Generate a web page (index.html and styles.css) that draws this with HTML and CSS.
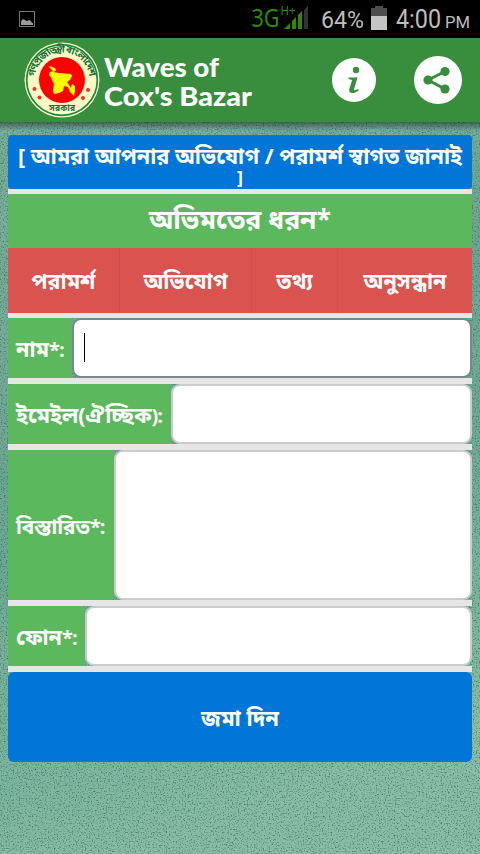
FILE: index.html
```html
<!DOCTYPE html>
<html lang="bn">
<head>
<meta charset="utf-8">
<title>Waves of Cox's Bazar</title>
<link rel="stylesheet" href="styles.css">
</head>
<body>
<div class="screen">
  <svg class="backdrop" width="480" height="732" viewBox="0 0 480 732" aria-hidden="true">
    <defs>
      <linearGradient id="sea" x1="0" y1="0" x2="0.25" y2="1">
        <stop offset="0" stop-color="#76ab97"/>
        <stop offset="0.5" stop-color="#69a390"/>
        <stop offset="0.86" stop-color="#7ab49d"/>
        <stop offset="1" stop-color="#88bca4"/>
      </linearGradient>
      <linearGradient id="shade" x1="0" y1="0" x2="0" y2="1">
        <stop offset="0" stop-color="#000" stop-opacity=".42"/>
        <stop offset="1" stop-color="#000" stop-opacity="0"/>
      </linearGradient>
      <filter id="grain" x="0" y="0" width="100%" height="100%" color-interpolation-filters="sRGB">
        <feTurbulence type="fractalNoise" baseFrequency="0.68" numOctaves="2" seed="8"/>
        <feColorMatrix values="0 0 0 0 0.2  0 0 0 0 0.42  0 0 0 0 0.37  2.4 0 0 0 -1.2"/>
      </filter>
      <filter id="cloud" x="0" y="0" width="100%" height="100%" color-interpolation-filters="sRGB">
        <feTurbulence type="fractalNoise" baseFrequency="0.012" numOctaves="2" seed="3"/>
        <feColorMatrix values="0 0 0 0 0.56  0 0 0 0 0.76  0 0 0 0 0.68  0.6 0 0 0 -0.16"/>
      </filter>
    </defs>
    <rect width="480" height="732" fill="url(#sea)"/>
    <rect width="480" height="732" filter="url(#cloud)"/>
    <rect width="480" height="732" filter="url(#grain)"/>
    <rect width="480" height="9" fill="url(#shade)"/>
  </svg>

  <div class="status">
    <svg width="480" height="38" viewBox="0 0 480 38">
      <rect x="19.5" y="11.5" width="15" height="15" fill="none" stroke="#777"/>
      <path d="M21 25v-4l2-2 2 1 2 1 2-1 2 1 1 2h1v2z" fill="#999"/>
      <text class="net" x="251.5" y="27" font-size="26" textLength="28" lengthAdjust="spacingAndGlyphs">3G</text>
      <text class="net" x="280.5" y="15" font-size="13" textLength="15" lengthAdjust="spacingAndGlyphs">H+</text>
      <path d="M284 29l6-6v6zM292 21l4-4v12h-4zM298 15l4-4v18h-4z" fill="#2a8b00"/>
      <path d="M304 10l4-4v23h-4z" fill="#333"/>
      <text class="stat" x="321" y="28" font-size="24" textLength="43" lengthAdjust="spacingAndGlyphs">64%</text>
      <path d="M375 6h8v2h4v8h-16V8h4z" fill="#4d4d4d"/>
      <rect x="371" y="16" width="16" height="14" fill="#c4c4c4"/>
      <text class="stat" x="396" y="28" font-size="25" textLength="45" lengthAdjust="spacingAndGlyphs">4:00</text>
      <text class="stat" x="445" y="28" font-size="17" textLength="25" lengthAdjust="spacingAndGlyphs">PM</text>
    </svg>
  </div>

  <header class="bar">
    <svg class="seal" width="76" height="76" viewBox="0 0 76 76">
      <defs>
        <path id="arcTop" d="M10.5 38a27.5 27.5 0 0 1 55 0"/>
      </defs>
      <circle cx="38" cy="38" r="37.5" fill="#fffbc6"/>
      <circle cx="38" cy="38" r="35.3" fill="none" stroke="#168a42" stroke-width="1.7"/>
      <circle cx="38" cy="38" r="23" fill="red"/>
      <text class="ring"><textPath href="#arcTop" startOffset="3" textLength="80">গণপ্রজাতন্ত্রী বাংলাদেশ</textPath></text>
      <text class="ring" x="25" y="69" textLength="26" lengthAdjust="spacingAndGlyphs">সরকার</text>
      <path d="M26 24l2 1 3 1 1 2-2 2 4 1 13 1 1 2-2 4-3 2 2 3 2 3 1-4 3 2v5l-1 5-4-4-2-5-4-1-1 5-4 2-5 1-1-3 1-7-2-4-1-3-2-2 1-3 3-1-4-4z" fill="#ff0"/>
      <g fill="#ff2b20"><circle cx="10.5" cy="47" r="2"/><circle cx="15.5" cy="55.5" r="2"/><circle cx="64" cy="48" r="2"/><circle cx="59" cy="56" r="2"/></g>
    </svg>
    <svg class="title" width="156" height="64" viewBox="0 0 156 64">
      <text x="4" y="29" textLength="115" lengthAdjust="spacingAndGlyphs">Waves of</text>
      <text x="4" y="58" textLength="148" lengthAdjust="spacingAndGlyphs">Cox's Bazar</text>
    </svg>
    <svg class="info" width="44" height="44" viewBox="0 0 44 44">
      <circle cx="22" cy="22" r="22" fill="#fff"/>
      <circle cx="24" cy="12" r="3.2" fill="#388e3c"/>
      <path d="M16.5 19.5h9l-3.300 11.300c-.3 1.200 0 1.700.8 1.400l3.200-1.200.6 1c-2.500 2.500-5 3.300-7 3-2.600-.2-3-2-2.400-4.200l2.700-8.800-3.600-1z" fill="#388e3c"/>
    </svg>
    <svg class="share" width="48" height="48" viewBox="0 0 48 48">
      <circle cx="24" cy="24" r="24" fill="#fff"/>
      <path d="M31 15.500L14 24l17 9" fill="none" stroke="#388e3c" stroke-width="3"/>
      <g fill="#388e3c"><circle cx="31" cy="15.5" r="4.6"/><circle cx="14" cy="24" r="4.6"/><circle cx="31" cy="33" r="4.6"/></g>
    </svg>
  </header>

  <main class="form">
    <div class="notice">[ আমরা আপনার অভিযোগ / পরামর্শ স্বাগত জানাই<div class="last">]</div></div>
    <div class="rule thin"></div>
    <div class="heading">অভিমতের ধরন*</div>
    <div class="kinds">
      <span class="kind">পরামর্শ</span><span class="kind">অভিযোগ</span><span class="kind">তথ্য</span><span class="kind">অনুসন্ধান</span>
    </div>
    <div class="rule thin"></div>
    <div class="row"><label class="tag name">নাম<span class="mark">*:</span></label><div class="field focus"><i class="caret"></i></div></div>
    <div class="rule"></div>
    <div class="row"><label class="tag mail">ইমেইল(ঐচ্ছিক<span class="mark">):</span></label><div class="field"></div></div>
    <div class="rule"></div>
    <div class="row tall"><label class="tag detail">বিস্তারিত<span class="mark">*:</span></label><div class="field"></div></div>
    <div class="rule"></div>
    <div class="row"><label class="tag phone">ফোন<span class="mark">*:</span></label><div class="field"></div></div>
    <div class="rule"></div>
    <div class="submit">জমা দিন</div>
  </main>
</div>
</body>
</html>
```
FILE: styles.css
```css
* { box-sizing: border-box; }
body { margin: 0; background: #6fa691; font-family: "Open Sans", "Noto Sans Bengali", "Noto Sans", sans-serif; color: #fff; }
svg { display: block; flex: none; }
.screen { position: relative; width: 480px; height: 854px; overflow: hidden; }
.backdrop { position: absolute; left: 0; top: 122px; }
.status { height: 38px; background: #000; }
.net { fill: #2a8b00; font-family: "Noto Sans", sans-serif; }
.stat { fill: #bebebe; font-family: Roboto, sans-serif; }
.bar { display: flex; height: 84px; background: #388e3c; padding-left: 24px; }
.seal { margin-top: 4px; }
.ring { fill: #17723a; font-size: 10px; font-weight: 700; }
.title { margin-top: 10px; }
.title text { fill: #fff; font-family: Lato, sans-serif; font-weight: 900; font-size: 27px; }
.info { margin: 20px 0 0 76px; }
.share { margin: 18px 0 0 38px; }
.form { position: relative; margin: 13px 8px 0; font-weight: 700; font-size: 21.6px; }
.notice { height: 54px; padding: 10px 0 0; border-radius: 4px; background: #0275d8; text-align: center; line-height: 21px; white-space: nowrap; }
.last { font-size: 18px; line-height: 22px; }
.rule { height: 6px; background: #e6e6e6; }
.rule.thin { height: 5px; }
.heading { height: 54px; border-radius: 4px; background: #5cb85c; text-align: center; font-size: 26.5px; line-height: 50px; }
.kinds { display: grid; grid-template-columns: 112px 132px 86px 134px; height: 65px; background: #d9534f; }
.kind { height: 65px; line-height: 66px; text-align: center; white-space: nowrap; border-right: 1px solid #d04f4b; }
.kind:last-child { border-right: 0; }
.row { display: flex; height: 60px; }
.row.tall { height: 150px; }
.tag { display: flex; align-items: baseline; flex: none; padding: 0 0 0 8px; border-radius: 4px; background: #5cb85c; line-height: 62px; white-space: nowrap; }
.mark { font-size: 20px; font-weight: 700; letter-spacing: -1px; }
.name { width: 64px; }
.mail { width: 163px; }
.detail { width: 106px; font-size: 20.6px; line-height: 152px; }
.phone { width: 77px; }
.field { flex: 1; border: 2px solid #ccc; border-radius: 9px; background: #fff; }
.focus { border-color: #7b8790; padding: 13px 10px; }
.caret { display: block; width: 1px; height: 29px; background: #000; }
.submit { height: 90px; border-radius: 6px; background: #0275d8; text-align: center; font-size: 22px; line-height: 90px; }
```
